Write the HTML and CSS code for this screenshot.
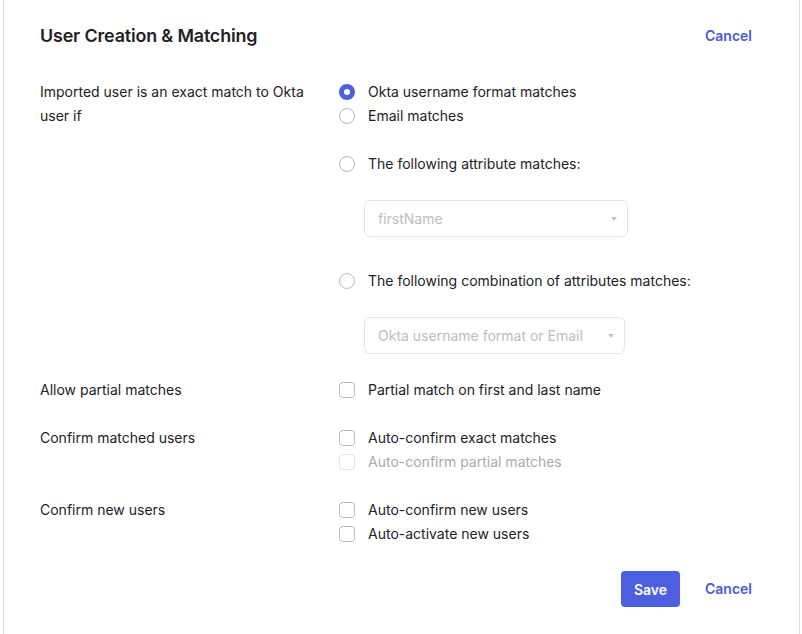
FILE: index.html
```html
<!DOCTYPE html>
<html>
<head>
<meta charset="utf-8">
<link rel="stylesheet" href="styles.css">
</head>
<body>
<div class="card">
  <div class="header">
    <h2 class="title">User Creation &amp; Matching</h2>
    <a class="link">Cancel</a>
  </div>
  <div class="form">
    <div class="row">
      <div class="label">Imported user is an exact match to Okta user if</div>
      <div class="opts">
        <label class="opt"><span class="radio checked"></span>Okta username format matches</label>
        <label class="opt"><span class="radio"></span>Email matches</label>
        <label class="opt gap"><span class="radio"></span>The following attribute matches:</label>
        <div class="select s1"><span>firstName</span><span class="caret"></span></div>
        <label class="opt gap2"><span class="radio"></span>The following combination of attributes matches:</label>
        <div class="select s2"><span>Okta username format or Email</span><span class="caret"></span></div>
      </div>
    </div>
    <div class="row">
      <div class="label">Allow partial matches</div>
      <div class="opts">
        <label class="opt"><span class="check"></span>Partial match on first and last name</label>
      </div>
    </div>
    <div class="row">
      <div class="label">Confirm matched users</div>
      <div class="opts">
        <label class="opt"><span class="check"></span>Auto-confirm exact matches</label>
        <label class="opt disabled"><span class="check"></span>Auto-confirm partial matches</label>
      </div>
    </div>
    <div class="row">
      <div class="label">Confirm new users</div>
      <div class="opts">
        <label class="opt"><span class="check"></span>Auto-confirm new users</label>
        <label class="opt"><span class="check"></span>Auto-activate new users</label>
      </div>
    </div>
  </div>
  <div class="footer">
    <button class="btn">Save</button>
    <a class="link">Cancel</a>
  </div>
</div>
</body>
</html>
```
FILE: styles.css
```css
html, body { margin: 0; padding: 0; background: #fff; }
body {
  font-family: Inter, "Noto Sans", sans-serif;
  color: #222226;
  font-size: 14px;
}
.card {
  margin-left: 3px;
  width: 797px;
  height: 634px;
  box-sizing: border-box;
  border-left: 1px solid #dcdcdf;
  border-right: 1px solid #dcdcdf;
  padding: 24px 47px 0 36px;
}
.header {
  display: flex;
  justify-content: space-between;
  align-items: center;
  height: 24px;
}
.title {
  margin: 0;
  font-size: 17.9px;
  font-weight: 600;
  line-height: 24px;
  letter-spacing: -0.15px;
}
.link {
  display: block;
  line-height: 24px;
  color: #4b5bd3;
  font-weight: 600;
  font-size: 14px;
  cursor: pointer;
}
.form {
  margin-top: 32px;
  display: flex;
  flex-direction: column;
  gap: 24px;
}
.row {
  display: flex;
}
.label {
  width: 299px;
  line-height: 24px;
  padding-right: 30px;
  box-sizing: border-box;
}
.opts {
  display: flex;
  flex-direction: column;
}
.opt {
  display: flex;
  align-items: center;
  line-height: 24px;
  height: 24px;
}
.opt.gap { margin-top: 24px; }
.opt.gap2 { margin-top: 32px; }
.opt.disabled { color: #a9a9ae; }
.radio, .check {
  width: 16px;
  height: 16px;
  box-sizing: border-box;
  border: 1.5px solid #b8b8bd;
  margin-right: 13px;
  flex: none;
}
.radio { border-radius: 50%; }
.radio.checked {
  border: 5px solid #4b5fdf;
  background: #fff;
}
.check { border-radius: 4px; }
.disabled .check { border-color: #e4e4e7; }
.select {
  margin-top: 24px;
  margin-left: 25px;
  height: 37px;
  box-sizing: border-box;
  border: 1px solid #e6e6ea;
  border-radius: 6px;
  display: flex;
  align-items: center;
  justify-content: space-between;
  padding: 0 10px 0 13px;
  color: #bdbdc3;
}
.s1 { width: 264px; }
.s2 { width: 261px; }
.caret {
  width: 0; height: 0;
  border-left: 3px solid transparent;
  border-right: 3px solid transparent;
  border-top: 4px solid #c8c8cc;
}
.footer {
  margin-top: 25px;
  display: flex;
  justify-content: flex-end;
  align-items: center;
  gap: 25px;
}
.btn {
  height: 36px;
  width: 59px;
  border: none;
  border-radius: 4px;
  background: #4b5fdf;
  color: #fff;
  font-family: inherit;
  font-size: 14px;
  font-weight: 600;
  padding: 0;
}
```
